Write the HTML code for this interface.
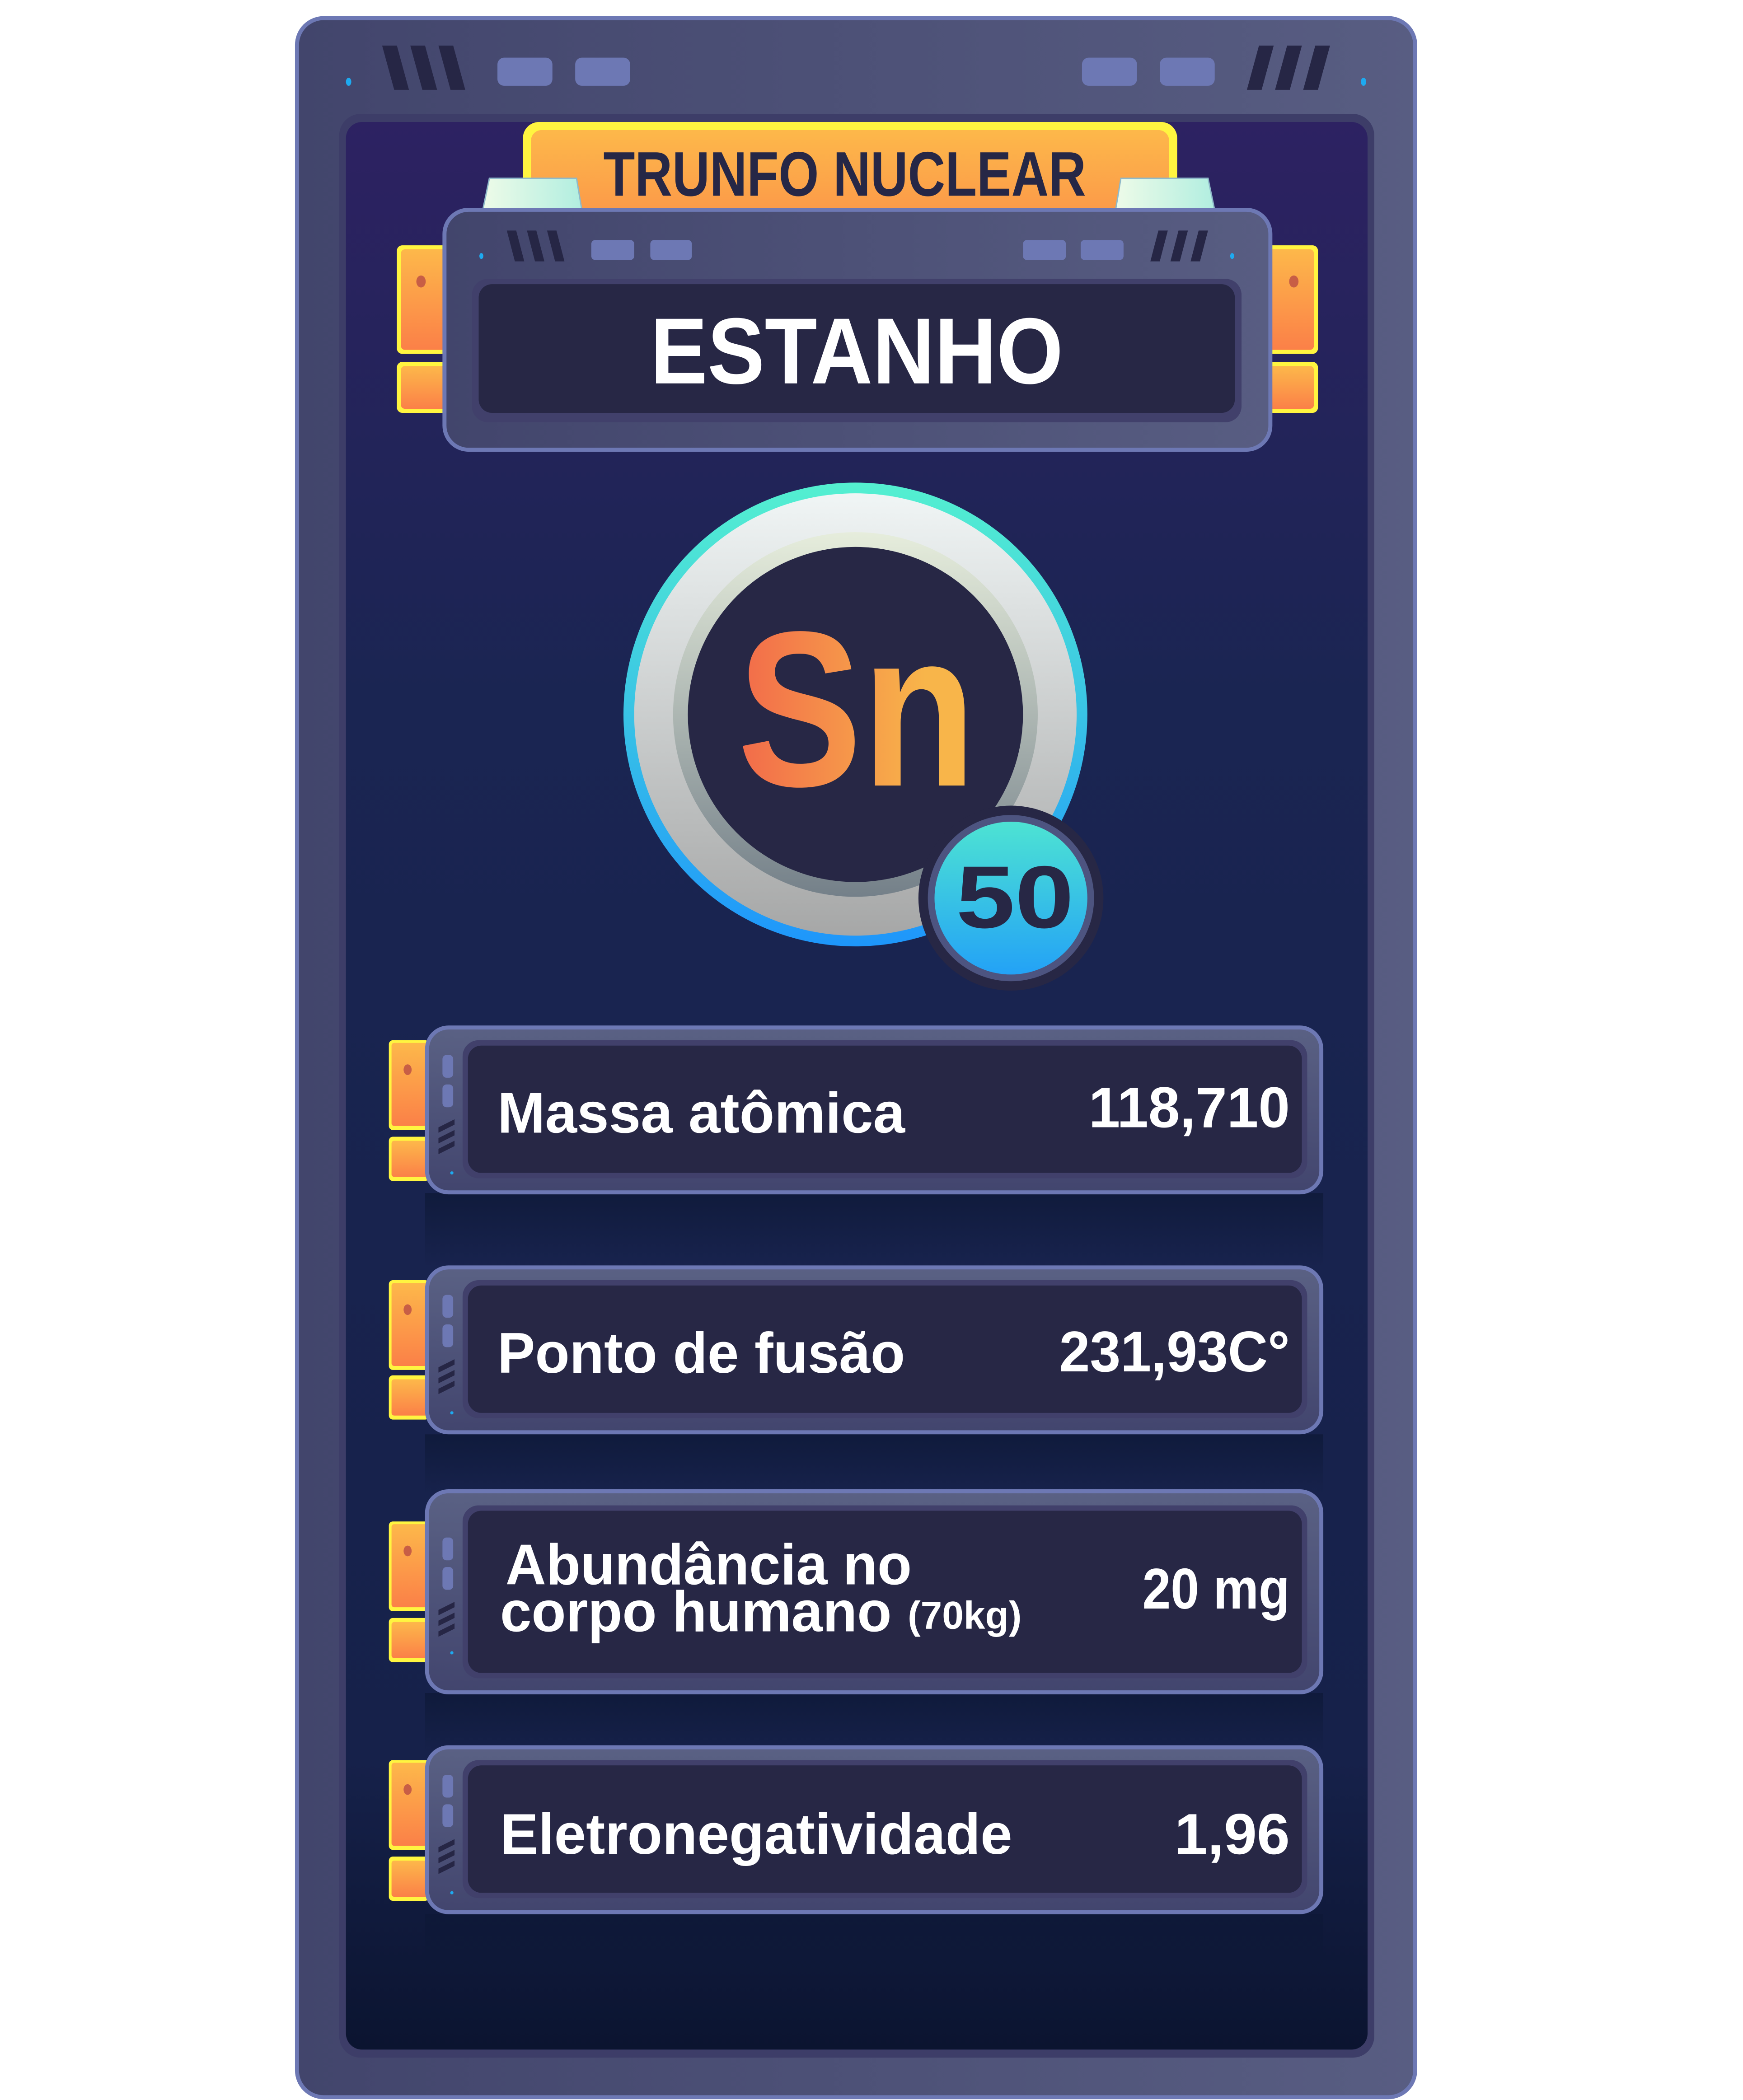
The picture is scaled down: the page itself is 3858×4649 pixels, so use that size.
<!DOCTYPE html>
<html><head><meta charset="utf-8"><style>
html,body{margin:0;padding:0;background:#fff;width:3858px;height:4649px;overflow:hidden}
svg{display:block}
text{font-family:"Liberation Sans Narrow","Liberation Sans",sans-serif;font-weight:bold}
</style></head><body>
<svg width="3858" height="4649" viewBox="0 0 1300 1566.6" xmlns="http://www.w3.org/2000/svg">
<defs>
<linearGradient id="frame" x1="0" x2="1" y1="0" y2="0"><stop offset="0" stop-color="#42456c"/><stop offset="1" stop-color="#585d82"/></linearGradient>
<linearGradient id="screen" x1="0" x2="0" y1="0" y2="1"><stop offset="0" stop-color="#2d2262"/><stop offset="0.3" stop-color="#1a2552"/><stop offset="0.85" stop-color="#16214a"/><stop offset="1" stop-color="#0b1430"/></linearGradient>
<linearGradient id="orange" x1="0" x2="0" y1="0" y2="1"><stop offset="0" stop-color="#fdb84a"/><stop offset="1" stop-color="#fb8048"/></linearGradient>
<linearGradient id="mint" x1="0" x2="1" y1="0" y2="0"><stop offset="0" stop-color="#eefbe8"/><stop offset="1" stop-color="#b1eee0"/></linearGradient>
<linearGradient id="ring" x1="0" x2="0" y1="0" y2="1"><stop offset="0" stop-color="#54f0d0"/><stop offset="1" stop-color="#1e96fb"/></linearGradient>
<linearGradient id="silver" x1="0" x2="0" y1="0" y2="1"><stop offset="0" stop-color="#f0f5f5"/><stop offset="1" stop-color="#a6a7a7"/></linearGradient>
<linearGradient id="gray" x1="0" x2="0" y1="0" y2="1"><stop offset="0" stop-color="#e6eddc"/><stop offset="1" stop-color="#748089"/></linearGradient>
<linearGradient id="badge" x1="0" x2="0" y1="0" y2="1"><stop offset="0" stop-color="#4de3d3"/><stop offset="1" stop-color="#23a2f6"/></linearGradient>
<linearGradient id="sn" x1="552" x2="690" y1="0" y2="0" gradientUnits="userSpaceOnUse"><stop offset="0" stop-color="#f26b4a"/><stop offset="1" stop-color="#f8b54a"/></linearGradient>
<linearGradient id="rowf" x1="0" x2="0" y1="0" y2="1"><stop offset="0" stop-color="#5a6184"/><stop offset="1" stop-color="#42456e"/></linearGradient>
<linearGradient id="shadow" x1="0" x2="0" y1="0" y2="1"><stop offset="0" stop-color="#0d1836" stop-opacity="0.75"/><stop offset="1" stop-color="#0d1836" stop-opacity="0"/></linearGradient>
<g id="rowdeco">
  <rect x="-27" y="11" width="30" height="67" rx="3" fill="#fff540"/>
  <rect x="-25" y="13" width="28" height="62" rx="2" fill="url(#orange)"/>
  <ellipse cx="-13" cy="33" rx="3" ry="4" fill="#c85e45"/>
</g>
</defs>

<rect x="221.5" y="13.5" width="834" height="1551" rx="20" fill="url(#frame)" stroke="#6d78b4" stroke-width="3"/>
<g fill="#262645">
<polygon points="285,34 296,34 305,67 294,67"/><polygon points="306,34 317,34 326,67 315,67"/><polygon points="327,34 338,34 347,67 336,67"/>
<polygon points="992,34 981,34 972,67 983,67"/><polygon points="971,34 960,34 951,67 962,67"/><polygon points="950,34 939,34 930,67 941,67"/>
</g>
<g fill="#6d78b4"><rect x="371" y="43" width="41" height="21" rx="5"/><rect x="429" y="43" width="41" height="21" rx="5"/><rect x="807" y="43" width="41" height="21" rx="5"/><rect x="865" y="43" width="41" height="21" rx="5"/></g>
<g fill="#1eaaf0"><ellipse cx="260" cy="61" rx="2" ry="3"/><ellipse cx="1017" cy="61" rx="2" ry="3"/></g>

<rect x="253" y="85" width="772" height="1450" rx="16" fill="#3d3d68"/>
<rect x="258" y="91" width="762" height="1438" rx="12" fill="url(#screen)"/>

<rect x="390" y="91" width="488" height="120" rx="12" fill="#fff540"/>
<rect x="396" y="97" width="476" height="114" rx="8" fill="url(#orange)"/>
<text x="450" y="146" font-size="47" fill="#262746" textLength="360" lengthAdjust="spacingAndGlyphs">TRUNFO NUCLEAR</text>
<polygon points="365,133 430,133 434,157 360,157" fill="url(#mint)" stroke="#8fb9c9" stroke-width="1"/>
<polygon points="836,133 901,133 906,157 832,157" fill="url(#mint)" stroke="#8fb9c9" stroke-width="1"/>

<g>
<rect x="296" y="183" width="40" height="81" rx="4" fill="#fff540"/><rect x="299" y="186" width="37" height="75" rx="3" fill="url(#orange)"/>
<rect x="296" y="270" width="40" height="38" rx="4" fill="#fff540"/><rect x="299" y="273" width="37" height="32" rx="3" fill="url(#orange)"/>
<ellipse cx="314" cy="210" rx="3.5" ry="4.5" fill="#c85e45"/>
<rect x="943" y="183" width="40" height="81" rx="4" fill="#fff540"/><rect x="943" y="186" width="37" height="75" rx="3" fill="url(#orange)"/>
<rect x="943" y="270" width="40" height="38" rx="4" fill="#fff540"/><rect x="943" y="273" width="37" height="32" rx="3" fill="url(#orange)"/>
<ellipse cx="965" cy="210" rx="3.5" ry="4.5" fill="#c85e45"/>
</g>
<rect x="331.5" y="156.5" width="616" height="179" rx="18" fill="url(#frame)" stroke="#6d78b4" stroke-width="3"/>
<g fill="#262645">
<polygon points="378,172 385,172 391,195 384,195"/><polygon points="393,172 400,172 406,195 399,195"/><polygon points="408,172 415,172 421,195 414,195"/>
<polygon points="901,172 894,172 888,195 895,195"/><polygon points="886,172 879,172 873,195 880,195"/><polygon points="871,172 864,172 858,195 865,195"/>
</g>
<g fill="#6d78b4"><rect x="441" y="179" width="32" height="15" rx="3"/><rect x="485" y="179" width="31" height="15" rx="3"/><rect x="763" y="179" width="32" height="15" rx="3"/><rect x="806" y="179" width="32" height="15" rx="3"/></g>
<g fill="#1eaaf0"><ellipse cx="359" cy="191" rx="1.5" ry="2.2"/><ellipse cx="919" cy="191" rx="1.5" ry="2.2"/></g>
<rect x="352" y="208" width="574" height="107" rx="12" fill="#41406b"/>
<rect x="357" y="212" width="564" height="96" rx="10" fill="#272745"/>
<text x="485" y="286" font-size="70" fill="#fff" textLength="308" lengthAdjust="spacingAndGlyphs" style="font-family:'Liberation Sans',sans-serif">ESTANHO</text>

<circle cx="638" cy="533" r="173" fill="url(#ring)"/>
<circle cx="638" cy="533" r="165" fill="url(#silver)"/>
<circle cx="638" cy="533" r="136" fill="url(#gray)"/>
<circle cx="638" cy="533" r="125" fill="#272745"/>
<text x="550" y="586" font-size="165" fill="url(#sn)" textLength="178" lengthAdjust="spacingAndGlyphs" style="font-family:'Liberation Sans',sans-serif">Sn</text>
<circle cx="754" cy="670" r="69" fill="#272745"/>
<circle cx="754" cy="670" r="62" fill="#4d5480"/>
<circle cx="754" cy="670" r="57" fill="url(#badge)"/>
<text x="713" y="692" font-size="66" fill="#272745" textLength="88" lengthAdjust="spacingAndGlyphs" style="font-family:'Liberation Sans',sans-serif">50</text>

<g id="rows">
<rect x="317" y="890" width="670" height="55" fill="url(#shadow)"/>
<use href="#rowdeco" x="317" y="765"/>
<rect x="290" y="848" width="30" height="33" rx="3" fill="#fff540"/><rect x="292" y="851" width="28" height="27" rx="2" fill="url(#orange)"/>
<rect x="318.5" y="766.5" width="667" height="123" rx="16" fill="url(#rowf)" stroke="#6d78b4" stroke-width="3"/>
<rect x="345" y="776" width="630" height="103" rx="12" fill="#41406b"/>
<rect x="349" y="780" width="622" height="95" rx="10" fill="#272745"/>
<rect x="330" y="787" width="8" height="17" rx="3" fill="#6d78b4"/><rect x="330" y="809" width="8" height="17" rx="3" fill="#6d78b4"/>
<g fill="#262645"><polygon points="327,841 339,835 339,839 327,845"/><polygon points="327,849 339,843 339,847 327,853"/><polygon points="327,857 339,851 339,855 327,861"/></g>
<circle cx="337" cy="875" r="1.2" fill="#1eaaf0"/>
<text x="371" y="845" font-size="43" fill="#fff" textLength="304" lengthAdjust="spacingAndGlyphs">Massa atômica</text>
<text x="962" y="841" font-size="43" fill="#fff" text-anchor="end" textLength="150" lengthAdjust="spacingAndGlyphs">118,710</text>

<rect x="317" y="1070" width="670" height="45" fill="url(#shadow)"/>
<use href="#rowdeco" x="317" y="944"/>
<rect x="290" y="1026" width="30" height="33" rx="3" fill="#fff540"/><rect x="292" y="1029" width="28" height="27" rx="2" fill="url(#orange)"/>
<rect x="318.5" y="945.5" width="667" height="123" rx="16" fill="url(#rowf)" stroke="#6d78b4" stroke-width="3"/>
<rect x="345" y="955" width="630" height="103" rx="12" fill="#41406b"/>
<rect x="349" y="959" width="622" height="95" rx="10" fill="#272745"/>
<rect x="330" y="966" width="8" height="17" rx="3" fill="#6d78b4"/><rect x="330" y="988" width="8" height="17" rx="3" fill="#6d78b4"/>
<g fill="#262645"><polygon points="327,1020 339,1014 339,1018 327,1024"/><polygon points="327,1028 339,1022 339,1026 327,1032"/><polygon points="327,1036 339,1030 339,1034 327,1040"/></g>
<circle cx="337" cy="1054" r="1.2" fill="#1eaaf0"/>
<text x="371" y="1024" font-size="43" fill="#fff" textLength="304" lengthAdjust="spacingAndGlyphs">Ponto de fusão</text>
<text x="962" y="1023" font-size="43" fill="#fff" text-anchor="end" textLength="172" lengthAdjust="spacingAndGlyphs">231,93C°</text>

<rect x="317" y="1263" width="670" height="45" fill="url(#shadow)"/>
<use href="#rowdeco" x="317" y="1124"/>
<rect x="290" y="1207" width="30" height="33" rx="3" fill="#fff540"/><rect x="292" y="1210" width="28" height="27" rx="2" fill="url(#orange)"/>
<rect x="318.5" y="1112.5" width="667" height="150" rx="16" fill="url(#rowf)" stroke="#6d78b4" stroke-width="3"/>
<rect x="345" y="1123" width="630" height="129" rx="12" fill="#41406b"/>
<rect x="349" y="1127" width="622" height="121" rx="10" fill="#272745"/>
<rect x="330" y="1147" width="8" height="17" rx="3" fill="#6d78b4"/><rect x="330" y="1169" width="8" height="17" rx="3" fill="#6d78b4"/>
<g fill="#262645"><polygon points="327,1201 339,1195 339,1199 327,1205"/><polygon points="327,1209 339,1203 339,1207 327,1213"/><polygon points="327,1217 339,1211 339,1215 327,1221"/></g>
<circle cx="337" cy="1233" r="1.2" fill="#1eaaf0"/>
<text x="377" y="1182" font-size="43" fill="#fff" textLength="303" lengthAdjust="spacingAndGlyphs">Abundância no</text>
<text x="373" y="1217" font-size="43" fill="#fff" textLength="292" lengthAdjust="spacingAndGlyphs">corpo humano</text>
<text x="677" y="1215" font-size="29" fill="#fff" textLength="85" lengthAdjust="spacingAndGlyphs">(70kg)</text>
<text x="962" y="1200" font-size="43" fill="#fff" text-anchor="end" textLength="110" lengthAdjust="spacingAndGlyphs">20 mg</text>

<rect x="317" y="1428" width="670" height="45" fill="url(#shadow)"/>
<use href="#rowdeco" x="317" y="1302"/>
<rect x="290" y="1385" width="30" height="33" rx="3" fill="#fff540"/><rect x="292" y="1388" width="28" height="27" rx="2" fill="url(#orange)"/>
<rect x="318.5" y="1303.5" width="667" height="123" rx="16" fill="url(#rowf)" stroke="#6d78b4" stroke-width="3"/>
<rect x="345" y="1313" width="630" height="103" rx="12" fill="#41406b"/>
<rect x="349" y="1317" width="622" height="95" rx="10" fill="#272745"/>
<rect x="330" y="1324" width="8" height="17" rx="3" fill="#6d78b4"/><rect x="330" y="1346" width="8" height="17" rx="3" fill="#6d78b4"/>
<g fill="#262645"><polygon points="327,1378 339,1372 339,1376 327,1382"/><polygon points="327,1386 339,1380 339,1384 327,1390"/><polygon points="327,1394 339,1388 339,1392 327,1398"/></g>
<circle cx="337" cy="1412" r="1.2" fill="#1eaaf0"/>
<text x="373" y="1383" font-size="43" fill="#fff" textLength="382" lengthAdjust="spacingAndGlyphs">Eletronegatividade</text>
<text x="962" y="1383" font-size="43" fill="#fff" text-anchor="end" textLength="86" lengthAdjust="spacingAndGlyphs">1,96</text>
</g>
</svg>
</body></html>
